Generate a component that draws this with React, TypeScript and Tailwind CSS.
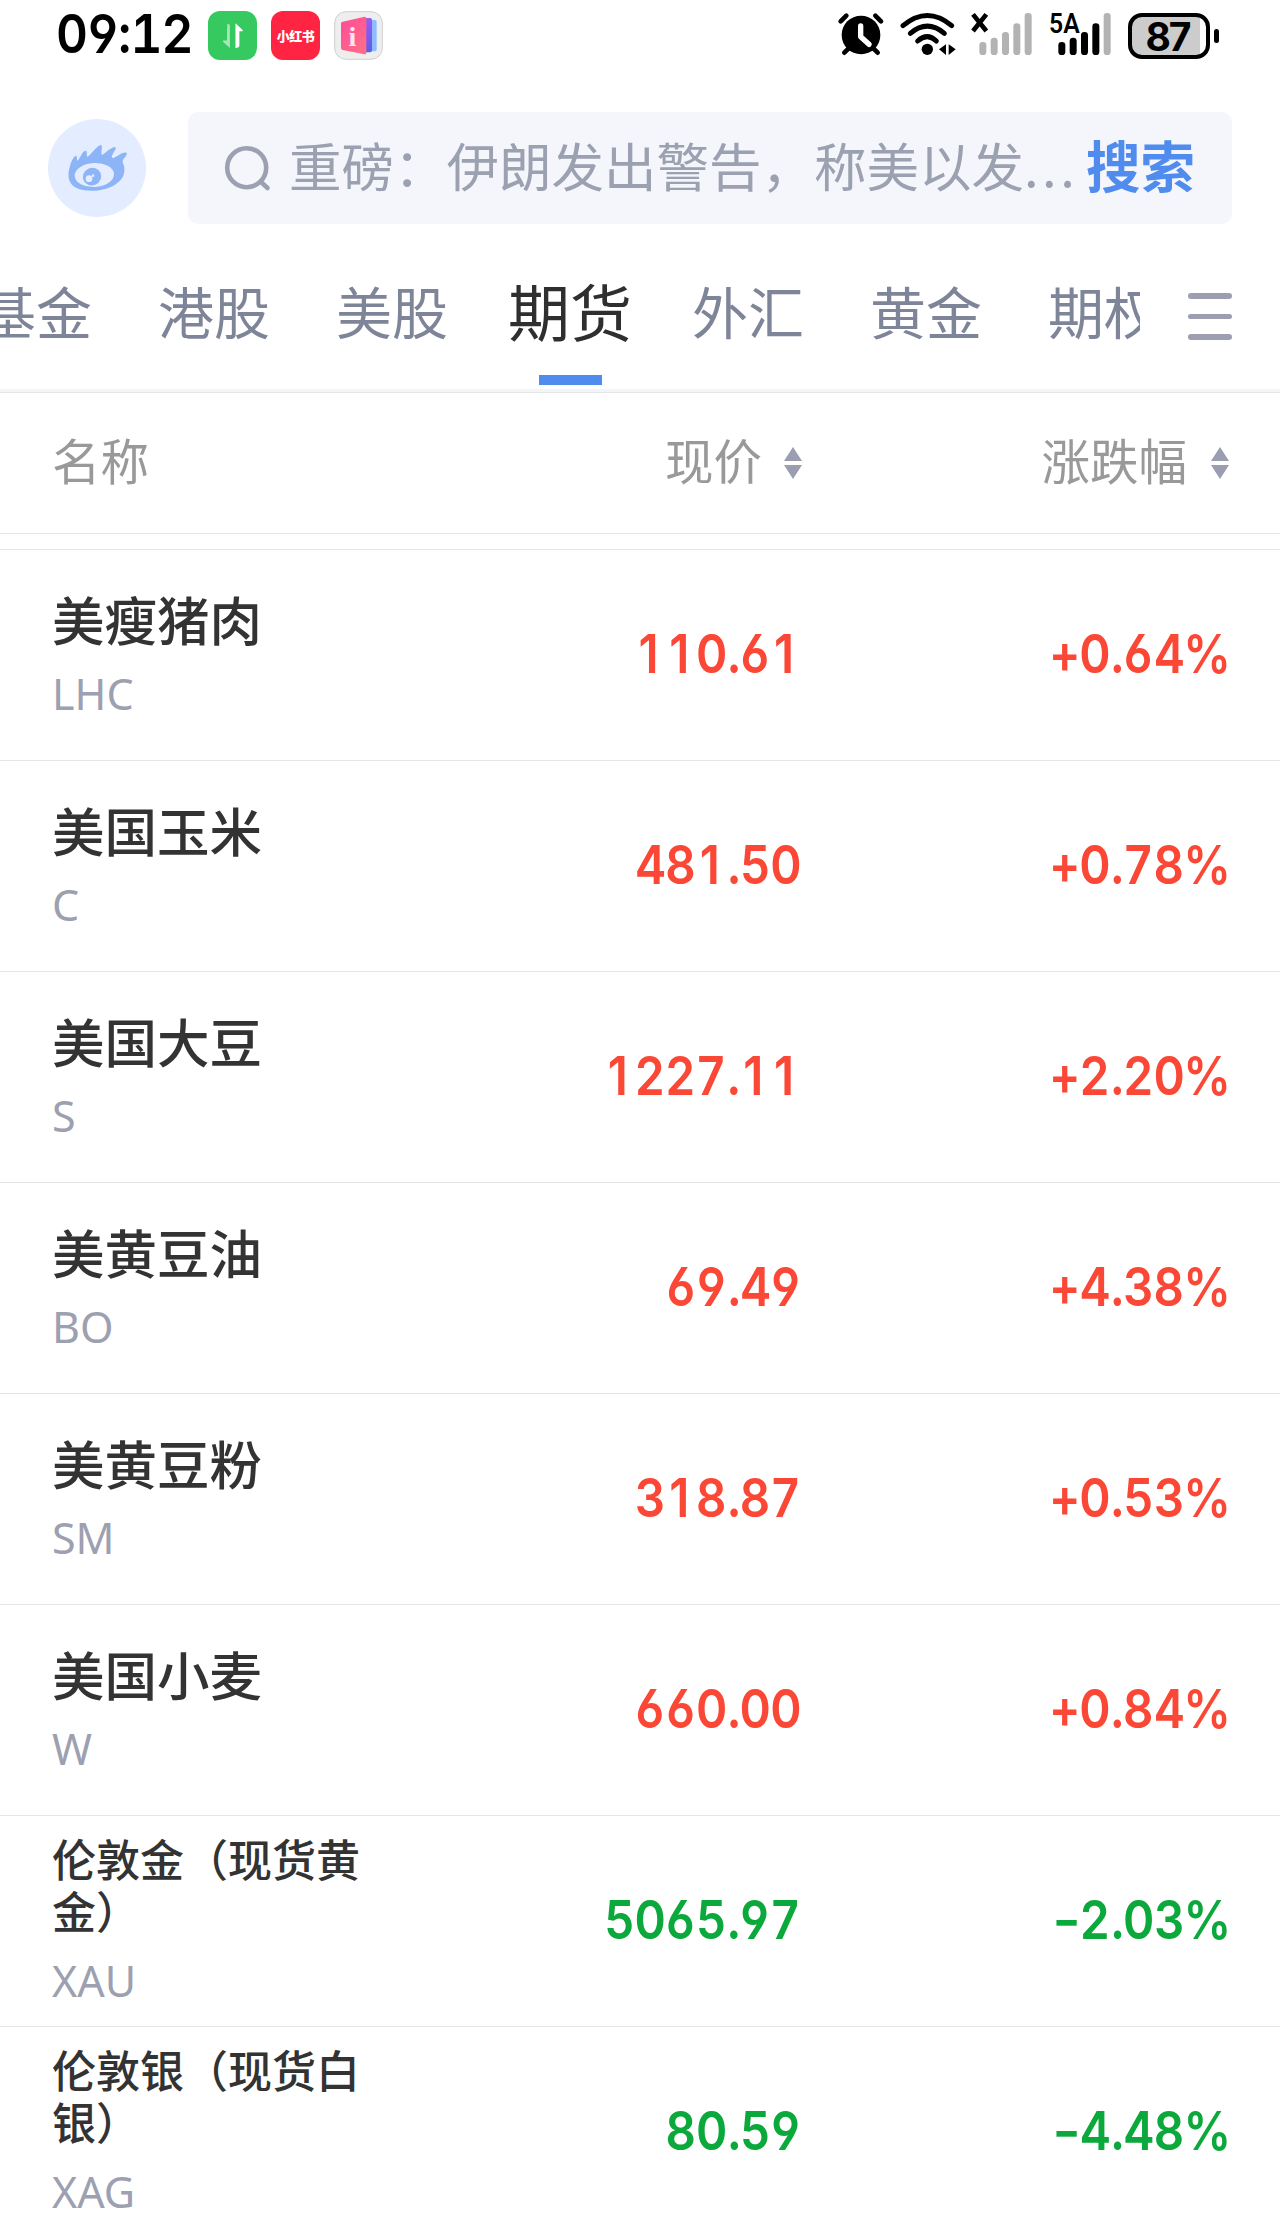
import type { ReactNode } from "react";

type Quote = {
  name: string;
  code: string;
  price: string;
  change: string;
};

const tabs = ["基金", "港股", "美股", "期货", "外汇", "黄金", "期权"];
const activeTab = "期货";

const quotes: Quote[] = [
  { name: "美瘦猪肉", code: "LHC", price: "110.61", change: "+0.64%" },
  { name: "美国玉米", code: "C", price: "481.50", change: "+0.78%" },
  { name: "美国大豆", code: "S", price: "1227.11", change: "+2.20%" },
  { name: "美黄豆油", code: "BO", price: "69.49", change: "+4.38%" },
  { name: "美黄豆粉", code: "SM", price: "318.87", change: "+0.53%" },
  { name: "美国小麦", code: "W", price: "660.00", change: "+0.84%" },
  { name: "伦敦金（现货黄金）", code: "XAU", price: "5065.97", change: "-2.03%" },
  { name: "伦敦银（现货白银）", code: "XAG", price: "80.59", change: "-4.48%" },
];

function Signal({ level, children }: { level: number; children: ReactNode }) {
  const bars = [
    { x: 0, top: 129 },
    { x: 34, top: 116 },
    { x: 68, top: 99 },
    { x: 102, top: 73 },
    { x: 136, top: 42 },
  ];

  return (
    <svg viewBox="-34 36 192 138" className="h-[46px] w-[64px] overflow-visible">
      {children}
      {bars.map((bar, index) => (
        <rect
          key={bar.x}
          x={bar.x}
          y={bar.top}
          width="21"
          height={168 - bar.top}
          rx="10"
          fill={index < level ? "#000" : "#b3b3b3"}
        />
      ))}
    </svg>
  );
}

function StatusBar() {
  return (
    <div className="flex h-[84px] items-start pt-[11px] pr-[61px] pl-[56px]">
      <span className="w-[152px] origin-left scale-x-[0.915] font-['Inter'] text-[54px] leading-[46px] font-semibold tracking-[-1px] whitespace-nowrap text-black [font-feature-settings:'tnum','cv03','cv04']">
        09:12
      </span>
      <div className="flex gap-[14px]">
        <div className="flex size-[49px] items-center justify-center rounded-[12px] bg-[#36c95f]">
          <svg viewBox="665 65 64 80" className="h-[27px] w-[21px]">
            <path d="M681 69q8 0 8 8v66l-21-19v-4h12z" fill="#a6e7b8" />
            <path d="M706 143V68l22 20v4h-10v43q0 8-12 8z" fill="#fff" />
          </svg>
        </div>
        <div className="flex size-[49px] items-center justify-center rounded-[12px] bg-[#ff2442]">
          <span className="text-[13px] leading-none font-black tracking-[-0.5px] text-white">小红书</span>
        </div>
        <svg viewBox="1002 33 147 147" className="size-[49px]">
          <defs>
            <linearGradient id="book" x1="0" y1="0" x2="0.8" y2="1">
              <stop offset="0" stopColor="#ff4a98" />
              <stop offset="1" stopColor="#ff6e88" />
            </linearGradient>
            <linearGradient id="page" x1="0" y1="0" x2="0" y2="1">
              <stop offset="0" stopColor="#9a5cf0" />
              <stop offset="1" stopColor="#5d5be8" />
            </linearGradient>
          </defs>
          <rect x="1004" y="35" width="143" height="143" rx="34" fill="#eeeeef" stroke="#cfcfcf" strokeWidth="3" />
          <rect x="1106" y="60" width="24" height="94" rx="5" fill="#8dbcff" />
          <path d="M1092 54h19q5 0 5 6v90q0 7-6 7h-18z" fill="url(#page)" />
          <path d="M1028 65l66-15q5 0 5 6v102q0 6-6 5l-65-13q-5-1-5-6V70q0-4 5-5z" fill="url(#book)" />
          <text x="1057" y="137" textAnchor="middle" fontFamily="Liberation Serif" fontWeight="700" fontSize="84" fill="#ffe3ee">
            i
          </text>
        </svg>
      </div>

      <div className="ml-auto flex items-start">
        <svg viewBox="50 36 144 138" className="h-[46px] w-[48px]">
          <g stroke="#000" strokeLinecap="round" strokeWidth="14">
            <path d="M61 67l17-17M182 67l-17-17M88 145l-16 16M156 145l16 16" />
          </g>
          <circle cx="122" cy="108" r="58" />
          <path d="M121 81v32l25 23" fill="none" stroke="#fff" strokeWidth="16" strokeLinecap="round" strokeLinejoin="round" />
        </svg>
        <svg viewBox="236 36 174 138" className="ml-[14px] h-[46px] w-[58px]">
          <g fill="none" stroke="#000" strokeWidth="15" strokeLinecap="round">
            <path d="M248 80q73-61 146 0" />
            <path d="M270 103q51-43 102 0" />
            <path d="M292 126q29-26 56 0" />
          </g>
          <circle cx="321" cy="151" r="17" />
          <path d="M377 136v32l-21-17zM385 136v32l21-17z" />
        </svg>
        <div className="ml-[11px]">
          <Signal level={0}>
            <path d="M-19 46l40 50M21 46l-40 50" stroke="#000" strokeWidth="14" />
          </Signal>
        </div>
        <div className="ml-[15px]">
          <Signal level={4}>
            <text x="-28" y="102" fontFamily="Roboto" fontSize="82" fontWeight="600" textLength="92" lengthAdjust="spacingAndGlyphs">
              5A
            </text>
          </Signal>
        </div>
        <div className="ml-[17px] flex items-center gap-[4px] pt-[2px]">
          <div className="flex h-[46px] w-[82px] items-center justify-center rounded-[14px] border-[4px] border-black bg-[linear-gradient(90deg,#ccc_68px,#fff_68px)] pr-[3px] font-['Inter'] text-[39px] leading-none font-bold tracking-[-2px] text-black">
            87
          </div>
          <div className="h-[14px] w-[5px] rounded-full bg-black" />
        </div>
      </div>
    </div>
  );
}

function EyeLogo() {
  return (
    <svg viewBox="144 57 294 294" className="size-[98px] shrink-0">
      <circle cx="291" cy="204" r="147" fill="#e3edff" />
      <path
        d="M211 195C212 188 221 168 228 167C233 167 229 181 233 182C241 174 247 153 256 152C264 152 258 166 262 170C274 165 290 136 303 135C310 137 301 157 306 165C315 161 329 144 345 141C352 143 342 154 340 159C337 166 333 171 338 174C347 175 363 156 379 158C385 161 373 173 369 179C366 184 369 190 372 197C377 221 368 239 345 254C317 272 267 277 237 267C208 258 198 232 211 195Z"
        fill="#8db4f7"
      />
      <ellipse cx="283" cy="225" rx="59" ry="36" fill="#e3edff" transform="rotate(-3 283 225)" />
      <ellipse cx="276" cy="230" rx="28" ry="26" fill="#8db4f7" transform="rotate(-25 276 230)" />
      <circle cx="267" cy="236" r="10" fill="#e3edff" />
      <circle cx="279" cy="227" r="4" fill="#e3edff" />
    </svg>
  );
}

function SearchHeader() {
  return (
    <div className="flex h-[168px] items-center px-[48px]">
      <EyeLogo />
      <div className="ml-[42px] flex h-[112px] flex-1 items-center rounded-[10px] bg-[#f4f6fc] pr-[37px] pl-[36px]">
        <svg viewBox="0 0 48 48" className="size-[48px] shrink-0" fill="none" stroke="#9ca1b1" strokeWidth="4.6" strokeLinecap="round">
          <circle cx="22.7" cy="23.7" r="19.5" />
          <path d="M37 38l6.5 6" />
        </svg>
        <div className="ml-[17px] flex pb-[8px] text-[52.5px] leading-none whitespace-nowrap text-[#9ca1b1]">
          重磅：伊朗发出警告，称美以发
          <span className="tracking-[3.5px]">...</span>
        </div>
        <span className="ml-auto pb-[8px] text-[54.5px] leading-none font-bold whitespace-nowrap text-[#508cee]">搜索</span>
      </div>
    </div>
  );
}

function MarketTabs() {
  return (
    <nav className="flex h-[140px] border-b-[3px] border-[#f4f5f9]">
      <div className="flex w-[1140px] overflow-hidden">
        <div className="-ml-[20px] flex gap-[66px]">
          {tabs.map((tab) => (
            <div key={tab} className="flex h-full w-[112px] shrink-0 flex-col items-center pt-[18px]">
              <span
                className={
                  tab === activeTab
                    ? "text-[62px] leading-[80px] whitespace-nowrap text-[#2f2f2f]"
                    : "text-[56px] leading-[80px] whitespace-nowrap text-[#7f8598]"
                }
              >
                {tab}
              </span>
              {tab === activeTab && <div className="mt-[25px] h-[10px] w-[63px] bg-[#508cee]" />}
            </div>
          ))}
        </div>
      </div>
      <div className="ml-[48px] flex flex-col gap-[15px] pt-[41px]">
        <div className="h-[5.5px] w-[44px] rounded-full bg-[#9d9eb1]" />
        <div className="h-[5.5px] w-[44px] rounded-full bg-[#9d9eb1]" />
        <div className="h-[5.5px] w-[44px] rounded-full bg-[#9d9eb1]" />
      </div>
    </nav>
  );
}

function SortIcon() {
  return (
    <svg viewBox="0 0 18 32" className="h-[32px] w-[18px]" fill="#9b9eb1">
      <path d="M9 0l9 14H0zM0 18h18L9 32z" />
    </svg>
  );
}

function TableHeader() {
  return (
    <div className="flex h-[142px] items-center border-y border-[#e5e5e8] pr-[51px] pl-[52px] text-[48.5px] leading-none text-[#999]">
      <span className="w-[312px] pb-[8px]">名称</span>
      <div className="flex w-[438px] items-center justify-end gap-[22px]">
        <span className="pb-[8px]">现价</span>
        <SortIcon />
      </div>
      <div className="ml-auto flex items-center gap-[24px]">
        <span className="pb-[8px]">涨跌幅</span>
        <SortIcon />
      </div>
    </div>
  );
}

// Every digit gets the same cell width so that prices line up
function Figures({ value }: { value: string }) {
  return (
    <span className="flex origin-right scale-x-[0.88] leading-none">
      {value.split("").map((char, index) => (
        <span
          key={index}
          className={
            char === "."
              ? "w-[14.8px] text-center"
              : char === "1"
                ? "w-[34.8px] pr-[3px] text-center"
                : char === "%"
                  ? "-mr-[2px] ml-[-1px]"
                  : char === "-"
                    ? "w-[29px] scale-x-[1.3] text-center"
                    : "w-[34.8px] text-center"
          }
        >
          {char}
        </span>
      ))}
    </span>
  );
}

function QuoteRow({ quote }: { quote: Quote }) {
  const wraps = quote.name.length > 6;
  const tone = quote.change.startsWith("+") ? "text-[#fb4735]" : "text-[#0ba83c]";

  return (
    <div className="flex h-[211px] items-center border-t border-[#e5e5e5] pr-[51px] pl-[52px]">
      <div className="w-[312px] pb-[3px]">
        <div
          className={
            wraps
              ? "text-[44px] leading-[52px] font-medium text-[#333]"
              : "text-[52.5px] leading-[62px] font-medium text-[#333]"
          }
        >
          {quote.name}
        </div>
        <div className="mt-[18px] font-['Noto_Sans'] text-[43px] leading-[54px] text-[#9ca0b0]">{quote.code}</div>
      </div>
      <div className={`flex flex-1 pb-[2px] font-['Inter'] text-[54px] font-semibold [font-feature-settings:'cv03','cv04'] ${tone}`}>
        <div className="flex w-[437px] justify-end">
          <Figures value={quote.price} />
        </div>
        <div className="flex flex-1 justify-end">
          <Figures value={quote.change} />
        </div>
      </div>
    </div>
  );
}

export default function App() {
  return (
    <div className="h-[2227px] w-[1280px] overflow-hidden bg-white font-['Noto_Sans_CJK_SC',sans-serif]" lang="zh-CN">
      <StatusBar />
      <SearchHeader />
      <MarketTabs />
      <TableHeader />
      <main className="pt-[15px]">
        {quotes.map((quote) => (
          <QuoteRow key={quote.code} quote={quote} />
        ))}
      </main>
    </div>
  );
}
